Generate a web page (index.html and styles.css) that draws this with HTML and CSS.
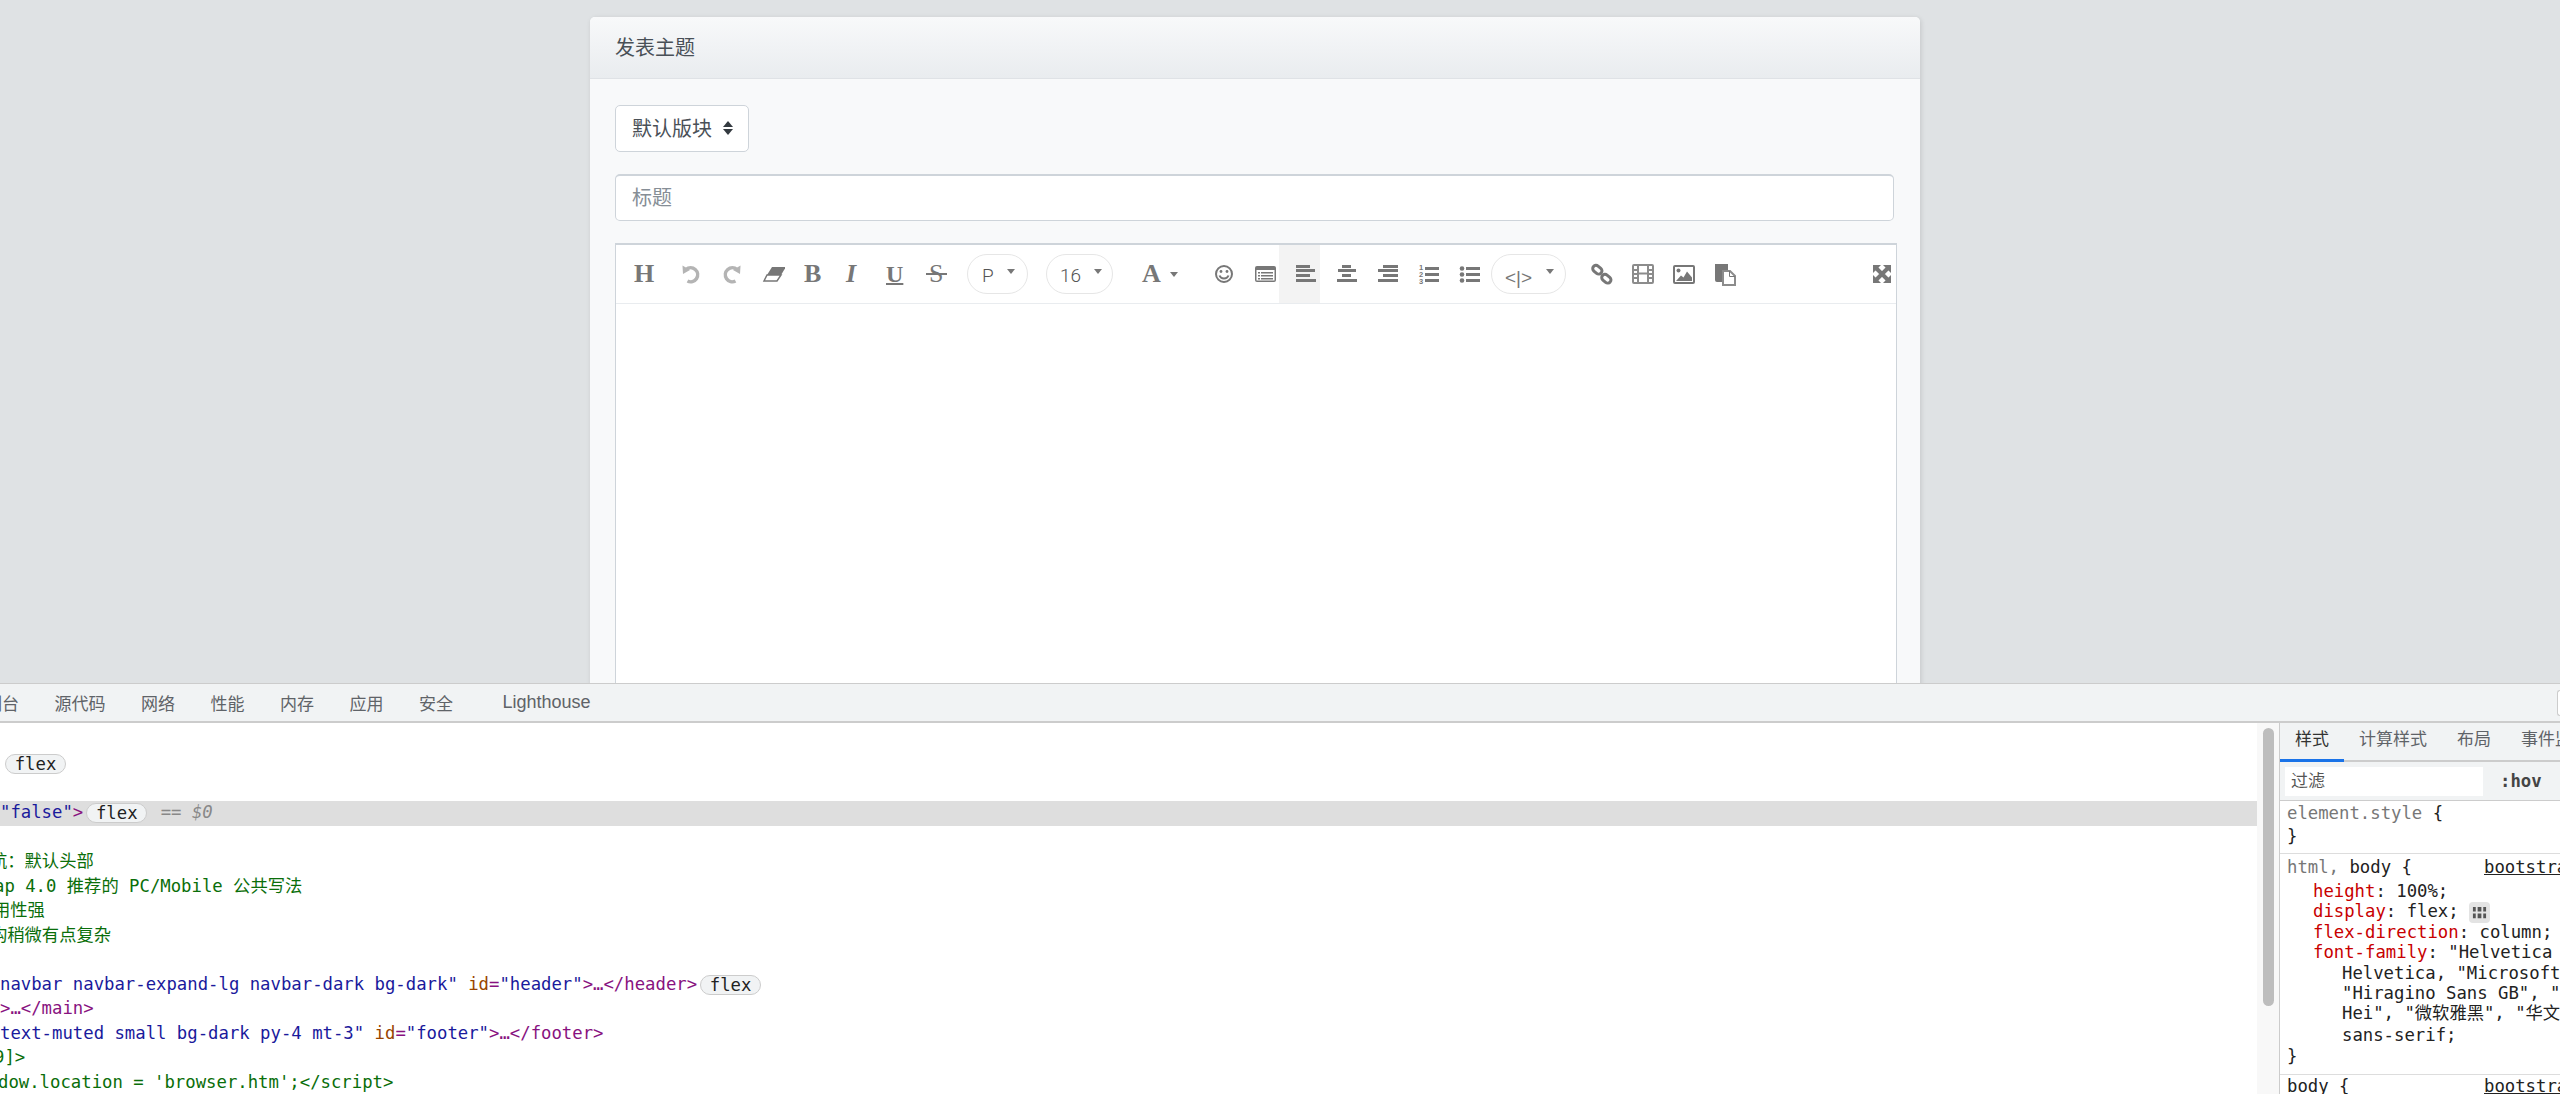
FILE: index.html
```html
<!DOCTYPE html>
<html lang="zh-CN">
<head>
<meta charset="utf-8">
<title>发表主题</title>
<link rel="stylesheet" href="styles.css">
</head>
<body>
<main class="page">
  <section class="card">
    <header class="card-head">发表主题</header>
    <div class="card-body">
      <div class="select">默认版块
        <svg class="updown" viewBox="0 0 10 14"><path d="M5 0 10 6H0Z"/><path d="M0 8H10L5 14Z"/></svg>
      </div>
      <input class="title-input" type="text" placeholder="标题">
      <div class="editor">
        <div class="toolbar">
          <div class="cell txt h-ico">H</div>
          <div class="cell sep">
            <svg class="ico light" viewBox="0 0 24 24"><path class="st" d="M7 7.5A7 7 0 1 1 8.5 19"/><path d="M3.5 3.5 4 12 11 8Z"/></svg>
          </div>
          <div class="cell">
            <svg class="ico light" viewBox="0 0 24 24"><path class="st" d="M17 7.5A7 7 0 1 0 15.5 19"/><path d="M20.5 3.5 20 12 13 8Z"/></svg>
          </div>
          <div class="cell">
            <svg class="ico" viewBox="0 0 24 24"><path d="M11 5H25L20 13H6Z"/><path class="ln" d="M6 13H20L16 19H3Z"/></svg>
          </div>
          <div class="cell txt b-ico">B</div>
          <div class="cell txt i-ico">I</div>
          <div class="cell txt u-ico">U</div>
          <div class="cell txt s-ico">S</div>
          <div class="pill pill-p"><span>P</span><i class="caret"></i></div>
          <div class="pill pill-size"><span>16</span><i class="caret"></i></div>
          <div class="color-btn"><span>A</span><i class="caret"></i></div>
          <div class="cell">
            <svg class="ico" viewBox="0 0 24 24"><circle class="ln2" cx="12" cy="12" r="8"/><circle cx="9" cy="9.5" r="1.4"/><circle cx="15" cy="9.5" r="1.4"/><path class="ln2" d="M7.5 13.5C9 17.5 15 17.5 16.500 13.5"/></svg>
          </div>
          <div class="cell">
            <svg class="ico" viewBox="0 0 24 24"><rect x="2" y="4" width="21" height="16" rx="2"/><rect class="wh" x="3.500" y="8" width="18" height="10.500"/><path d="M5 10h2v1.500H5zM8 10h12v1.500H8zM5 13h2v1.500H5zM8 13h12v1.500H8zM5 16h2v1.500H5zM8 16h12v1.500H8z"/></svg>
          </div>
          <div class="cell active">
            <svg class="ico" viewBox="0 0 24 24"><path d="M2 3h14v3H2zM2 7h19v3H2zM2 12h14v3H2zM2 17h20v3H2z"/></svg>
          </div>
          <div class="cell">
            <svg class="ico" viewBox="0 0 24 24"><path d="M7 3h9v3H7zM3 7h18v3H3zM7 12h9v3H7zM2 17h20v3H2z"/></svg>
          </div>
          <div class="cell">
            <svg class="ico" viewBox="0 0 24 24"><path d="M7 3h15v3H7zM2 7h20v3H2zM7 12h15v3H7zM2 17h20v3H2z"/></svg>
          </div>
          <div class="cell">
            <svg class="ico" viewBox="0 0 24 24"><text class="num" x="2" y="8">1</text><text class="num" x="2" y="15">2</text><text class="num" x="2" y="22">3</text><path d="M8 5h14v3H8zM8 11h14v3H8zM8 17h14v3H8z"/></svg>
          </div>
          <div class="cell">
            <svg class="ico" viewBox="0 0 24 24"><circle cx="4" cy="6.500" r="2.300"/><circle cx="4" cy="12.500" r="2.300"/><circle cx="4" cy="18.500" r="2.300"/><path d="M8 5h14v3H8zM8 11h14v3H8zM8 17h14v3H8z"/></svg>
          </div>
          <div class="pill pill-code"><span>&lt;|&gt;</span><i class="caret"></i></div>
          <div class="cell link-cell">
            <svg class="ico" viewBox="0 0 24 24"><rect class="ln3" x="2.500" y="4.500" width="10" height="6.500" rx="3.200" transform="rotate(40 7.500 7.500)"/><rect class="ln3" x="11.500" y="13.500" width="10" height="6.500" rx="3.200" transform="rotate(40 16.500 16.500)"/></svg>
          </div>
          <div class="cell">
            <svg class="ico" viewBox="0 0 24 24"><rect class="ln2 soft" x="2" y="3" width="20" height="18" rx="1"/><path class="ln2 soft" d="M7 3V21M17 3V21M2 8H7M2 12H7M2 16H7M17 8H22M17 12H22M17 16H22M7 11.500H17"/></svg>
          </div>
          <div class="cell">
            <svg class="ico" viewBox="0 0 24 24"><rect class="ln2" x="2" y="4" width="20" height="17" rx="1"/><circle cx="6.500" cy="8.500" r="2"/><path d="M4 19 9 13.500 11.500 15.500 15 9.500 20 15.500V19Z"/></svg>
          </div>
          <div class="cell">
            <svg class="ico" viewBox="0 0 24 24"><path d="M2 2H15V8H9V20H4A2 2 0 0 1 2 18Z"/><path class="ln2 soft" d="M10 9H17L22 14V23H10Z"/><path class="ln1" d="M16.500 9V14.500H22"/></svg>
          </div>
          <div class="cell full-cell">
            <svg class="ico" viewBox="0 0 24 24"><path d="M3 3H11L3 11ZM21 3V11L13 3ZM3 21V13L11 21ZM21 21H13L21 13Z"/><path class="st4" d="M6 6 18 18M18 6 6 18"/></svg>
          </div>
        </div>
        <div class="editor-area"></div>
      </div>
    </div>
  </section>
</main>

<section class="devtools">
  <nav class="dt-tabs">
    <span class="dt-first">控制台</span>
    <span>源代码</span>
    <span>网络</span>
    <span>性能</span>
    <span>内存</span>
    <span>应用</span>
    <span>安全</span>
    <span class="lighthouse">Lighthouse</span>
    <span class="dt-edge"></span>
  </nav>
  <div class="dt-body">
    <div class="tree">
      <div class="row"><b class="badge first-badge">flex</b></div>
      <div class="row"></div>
      <div class="row selected"><span class="val">"false"</span><span class="tag">&gt;</span><b class="badge">flex</b> <span class="ref">== <em>$0</em></span></div>
      <div class="row"></div>
      <div class="row com"><span class="off-10">航：默认头部</span></div>
      <div class="row com"><span class="off-6">ap 4.0 推荐的 PC/Mobile 公共写法</span></div>
      <div class="row com"><span class="off-7">用性强</span></div>
      <div class="row com"><span class="off-10">构稍微有点复杂</span></div>
      <div class="row"></div>
      <div class="row"><span class="val">navbar navbar-expand-lg navbar-dark bg-dark"</span> <span class="attr">id</span><span class="tag">=</span><span class="val">"header"</span><span class="tag">&gt;…&lt;/header&gt;</span><b class="badge">flex</b></div>
      <div class="row"><span class="tag">&gt;…&lt;/main&gt;</span></div>
      <div class="row"><span class="val">text-muted small bg-dark py-4 mt-3"</span> <span class="attr">id</span><span class="tag">=</span><span class="val">"footer"</span><span class="tag">&gt;…&lt;/footer&gt;</span></div>
      <div class="row com"><span class="off-6">9]&gt;</span></div>
      <div class="row com"><span class="off-2">dow.location = 'browser.htm';&lt;/script&gt;</span></div>
    </div>
    <div class="gutter"><div class="thumb"></div></div>
    <aside class="sidebar">
      <div class="side-tabs">
        <span class="side-tab on">样式</span>
        <span class="side-tab">计算样式</span>
        <span class="side-tab">布局</span>
        <span class="side-tab">事件监听器</span>
      </div>
      <div class="filter">
        <div class="filter-box">过滤</div>
        <span class="hov">:hov</span>
        <span class="hov cls">.cls</span>
      </div>
      <div class="rule rule-a">
        <div class="sel"><span class="dim">element.style</span> {</div>
        <div class="sel">}</div>
      </div>
      <div class="rule rule-b">
        <div class="sel first-sel"><span class="sel-name"><span class="dim">html,</span> body {</span><span class="src">bootstrap.css:1</span></div>
        <div class="decl"><span class="prop">height</span>: 100%;</div>
        <div class="decl"><span class="prop">display</span>: flex; <i class="flex-ico"><svg viewBox="0 0 16 16"><path d="M1 2h3v5H1zM6 2h4v5H6zM12 2h3v5h-3zM1 9h3v5H1zM6 9h4v5H6zM12 9h3v5h-3z"/></svg></i></div>
        <div class="decl"><span class="prop">flex-direction</span>: column;</div>
        <div class="decl"><span class="prop">font-family</span>: "Helvetica Neue",</div>
        <div class="decl cont">Helvetica, "Microsoft YaHei",</div>
        <div class="decl cont">"Hiragino Sans GB", "WenQuanYi Micro</div>
        <div class="decl cont tall">Hei", "微软雅黑", "华文细黑",</div>
        <div class="decl cont tall">sans-serif;</div>
        <div class="sel close">}</div>
      </div>
      <div class="rule rule-c">
        <div class="sel"><span class="sel-name">body {</span><span class="src">bootstrap.css:1</span></div>
      </div>
    </aside>
  </div>
</section>
</body>
</html>
```

FILE: styles.css
```css
* { box-sizing: border-box; }

html, body { margin: 0; height: 100%; }

body {
  display: flex;
  flex-direction: column;
  height: 1094px;
  overflow: hidden;
  background: #dfe2e4;
  font-family: "Liberation Sans", "Noto Sans CJK SC", sans-serif;
}

.page {
  height: 683px;
  flex: none;
  padding: 17px 0 0 590px;
  overflow: hidden;
}

.card {
  width: 1330px;
  height: 900px;
  background: #f8f9fa;
  border-radius: 5px;
  box-shadow: 1px 1px 5px rgba(0, 0, 0, .12);
}

.card-head {
  height: 62px;
  padding: 0 25px 2px;
  display: flex;
  align-items: center;
  font-size: 20px;
  color: #495057;
  background: linear-gradient(#f8f9fa, #e9ecef);
  border-bottom: 1px solid #dfe2e6;
  border-radius: 5px 5px 0 0;
}

.card-body { padding: 26px 25px 0; }

.select {
  width: 134px;
  height: 47px;
  display: flex;
  align-items: center;
  padding: 0 0 2px 16px;
  font-size: 20px;
  color: #495057;
  background: #fff;
  border: 1px solid #ced4da;
  border-radius: 5px;
}

.updown {
  width: 10px;
  height: 14px;
  margin-left: 11px;
  fill: #343a40;
}

.title-input {
  display: block;
  width: 1279px;
  height: 47px;
  margin: 22px 0;
  padding: 0 16px;
  font: 20px "Liberation Sans", "Noto Sans CJK SC", sans-serif;
  color: #495057;
  background: #fff;
  border: 1px solid #ced4da;
  border-top-width: 2px;
  border-radius: 5px;
  outline: none;
}

.title-input::placeholder { color: #868e96; opacity: 1; }

.editor {
  width: 1282px;
  background: #fff;
  border: 1px solid #ced4da;
  border-top-width: 2px;
}

.toolbar {
  height: 59px;
  display: flex;
  align-items: stretch;
  padding-left: 1px;
  border-bottom: 1px solid #e9ecef;
  color: #777;
}

.cell {
  flex: none;
  width: 41px;
  height: 58px;
  padding: 17px 0 0 15px;
}

.sep { margin-left: 6px; }
.cell.active { background: #f3f3f3; }

.ico {
  display: block;
  width: 24px;
  height: 24px;
  fill: #777;
}

.ico.light { fill: #b4b4b4; }
.ico .st { fill: none; stroke: #b4b4b4; stroke-width: 3.5; }
.ico .ln { fill: #fff; stroke: #777; stroke-width: 1.5; }
.ico .ln1 { fill: none; stroke: #777; stroke-width: 1; }
.ico .ln2 { fill: none; stroke: #777; stroke-width: 2; }
.ico .ln3 { fill: none; stroke: #777; stroke-width: 3; }
.ico .st4 { fill: none; stroke: #777; stroke-width: 4; }
.ico .wh { fill: #fff; }
.ico .soft { stroke: #8c8c8c; }
.ico .num { font: bold 7.500px "Liberation Sans", sans-serif; fill: #777; }

.txt {
  padding: 0;
  display: flex;
  align-items: center;
  justify-content: flex-start;
  font-family: "Liberation Serif", serif;
  font-weight: bold;
  font-size: 26px;
  line-height: 1;
}

.h-ico { padding-left: 17px; }
.b-ico { padding-left: 17px; }
.i-ico { padding-left: 18px; font-style: italic; }
.u-ico { padding-left: 17px; font-size: 24px; text-decoration: underline; text-decoration-thickness: 1.500px; }

.s-ico {
  position: relative;
  padding-left: 19px;
  font-size: 26px;
  font-weight: normal;
}

.s-ico::after {
  content: "";
  position: absolute;
  left: 16px;
  top: 28px;
  width: 21px;
  height: 2px;
  background: #777;
}

.pill {
  flex: none;
  height: 40px;
  margin-top: 9px;
  display: flex;
  align-items: center;
  border: 1px solid #e6e6e6;
  border-radius: 20px;
  font: 300 19px Roboto, "Liberation Sans", sans-serif;
  color: #555;
}

.pill span { padding-top: 3px; }

.pill-p { width: 61px; margin-left: 16px; padding-left: 14px; }
.pill-p .caret { margin-left: 13px; }
.pill-size { width: 67px; margin-left: 18px; padding-left: 13px; }
.pill-size .caret { margin-left: 13px; }
.pill-code { width: 75px; margin-left: 7px; padding-left: 13px; font: 19px "Liberation Sans", sans-serif; color: #777; }
.pill-code span { padding-top: 7px; }
.pill-code .caret { margin-left: 14px; }

.caret {
  flex: none;
  display: block;
  width: 0;
  height: 0;
  border: 4px solid transparent;
  border-top: 5px solid #777;
  border-bottom: 0;
  margin-top: -5px;
}

.color-btn {
  flex: none;
  width: 84px;
  display: flex;
  align-items: center;
  padding-left: 29px;
  font: bold 26px "Liberation Serif", serif;
  color: #777;
}

.color-btn .caret { margin: 0 0 0 9px; }

.link-cell { margin-left: 9px; }
.full-cell { margin-left: auto; }

.editor-area { height: 500px; }

/* devtools */
.devtools {
  flex: 1;
  min-height: 0;
  display: flex;
  flex-direction: column;
  background: #fff;
  border-top: 1px solid #ccc;
}

.dt-tabs {
  height: 39px;
  flex: none;
  display: flex;
  align-items: center;
  gap: 35.500px;
  font-size: 17px;
  color: #5f6368;
  background: #f1f3f4;
  border-bottom: 2px solid #ccc;
  overflow: hidden;
}

.dt-first { margin-left: -32px; }
.lighthouse { margin-left: 14px; font-size: 18px; }

.dt-edge {
  margin-left: auto;
  width: 3px;
  height: 26px;
  border: 1px solid #ccc;
  border-right: 0;
  border-radius: 3px 0 0 3px;
  background: #fff;
}

.dt-body {
  flex: 1;
  min-height: 0;
  display: flex;
}

.tree {
  flex: 1;
  min-width: 0;
  padding-top: 29px;
  overflow: hidden;
  font: 17.300px "DejaVu Sans Mono", "Noto Sans CJK SC", monospace;
  color: #222;
}

.row {
  height: 24.500px;
  line-height: 23px;
  white-space: pre;
  overflow: hidden;
}

.row.selected { background: #dedede; }
.com { color: #0a6e0a; }
.val { color: #1a1a9c; }
.tag { color: #881280; }
.attr { color: #994500; }
.ref { color: #888; margin-left: 3px; }
.ref em { font-style: italic; }

.off-2 { margin-left: -2px; }
.off-6 { margin-left: -6px; }
.off-7 { margin-left: -7px; }
.off-10 { margin-left: -10px; }

.badge {
  display: inline-block;
  height: 20px;
  width: 61px;
  margin-left: 3px;
  border: 1px solid #ccc;
  border-radius: 10px;
  background: #f1f3f4;
  color: #222;
  font-weight: normal;
  line-height: 18px;
  text-align: center;
  vertical-align: middle;
}

.first-badge { margin-left: 5px; }

.gutter {
  flex: none;
  width: 22px;
  padding: 5px 6px;
  background: #f8f8f8;
}

.thumb {
  width: 11px;
  height: 278px;
  background: #bdbdbd;
  border-radius: 6px;
}

.sidebar {
  flex: none;
  width: 281px;
  overflow: hidden;
  border-left: 1px solid #ccc;
  font: 17.300px "DejaVu Sans Mono", "Noto Sans CJK SC", monospace;
  color: #222;
}

.side-tabs {
  height: 39px;
  display: flex;
  white-space: nowrap;
  font: 17px "Liberation Sans", "Noto Sans CJK SC", sans-serif;
  color: #5f6368;
  background: #f1f3f4;
  border-bottom: 2px solid #ccc;
}

.side-tab {
  flex: none;
  height: 39px;
  padding: 0 15px;
  line-height: 34px;
}

.side-tab.on {
  color: #333;
  border-bottom: 3px solid #1a73e8;
}

.filter {
  height: 39px;
  display: flex;
  align-items: center;
  padding-left: 5px;
  white-space: nowrap;
  background: #f1f3f4;
  border-bottom: 1px solid #ccc;
}

.filter-box {
  flex: none;
  width: 198px;
  height: 29px;
  padding-left: 6px;
  background: #fff;
  font: 17px/29px "Liberation Sans", "Noto Sans CJK SC", sans-serif;
  color: #555;
}

.hov { margin-left: 17px; font-weight: bold; color: #444; }
.cls { margin-left: 18px; }

.rule {
  padding-left: 7px;
  border-bottom: 1px solid #ddd;
}

.rule-a { height: 53px; padding-top: 1px; }
.rule-b { height: 221px; padding-top: 2px; }

.sel {
  height: 23px;
  line-height: 23px;
  white-space: pre;
}

.first-sel { height: 25px; }
.sel-name { display: inline-block; width: 197px; }
.dim { color: #777; }
.src { text-decoration: underline; }
.close { height: 20px; line-height: 20px; }

.decl {
  height: 20.400px;
  line-height: 20.400px;
  padding-left: 26px;
  white-space: pre;
}

.cont { padding-left: 55px; }
.tall { height: 21.500px; line-height: 21.500px; }
.prop { color: #c80000; }

.flex-ico {
  display: inline-block;
  width: 21px;
  height: 21px;
  padding: 3px;
  vertical-align: middle;
  background: #e3e3e3;
  border-radius: 4px;
}

.flex-ico svg { display: block; width: 15px; height: 15px; fill: #555; }
```
